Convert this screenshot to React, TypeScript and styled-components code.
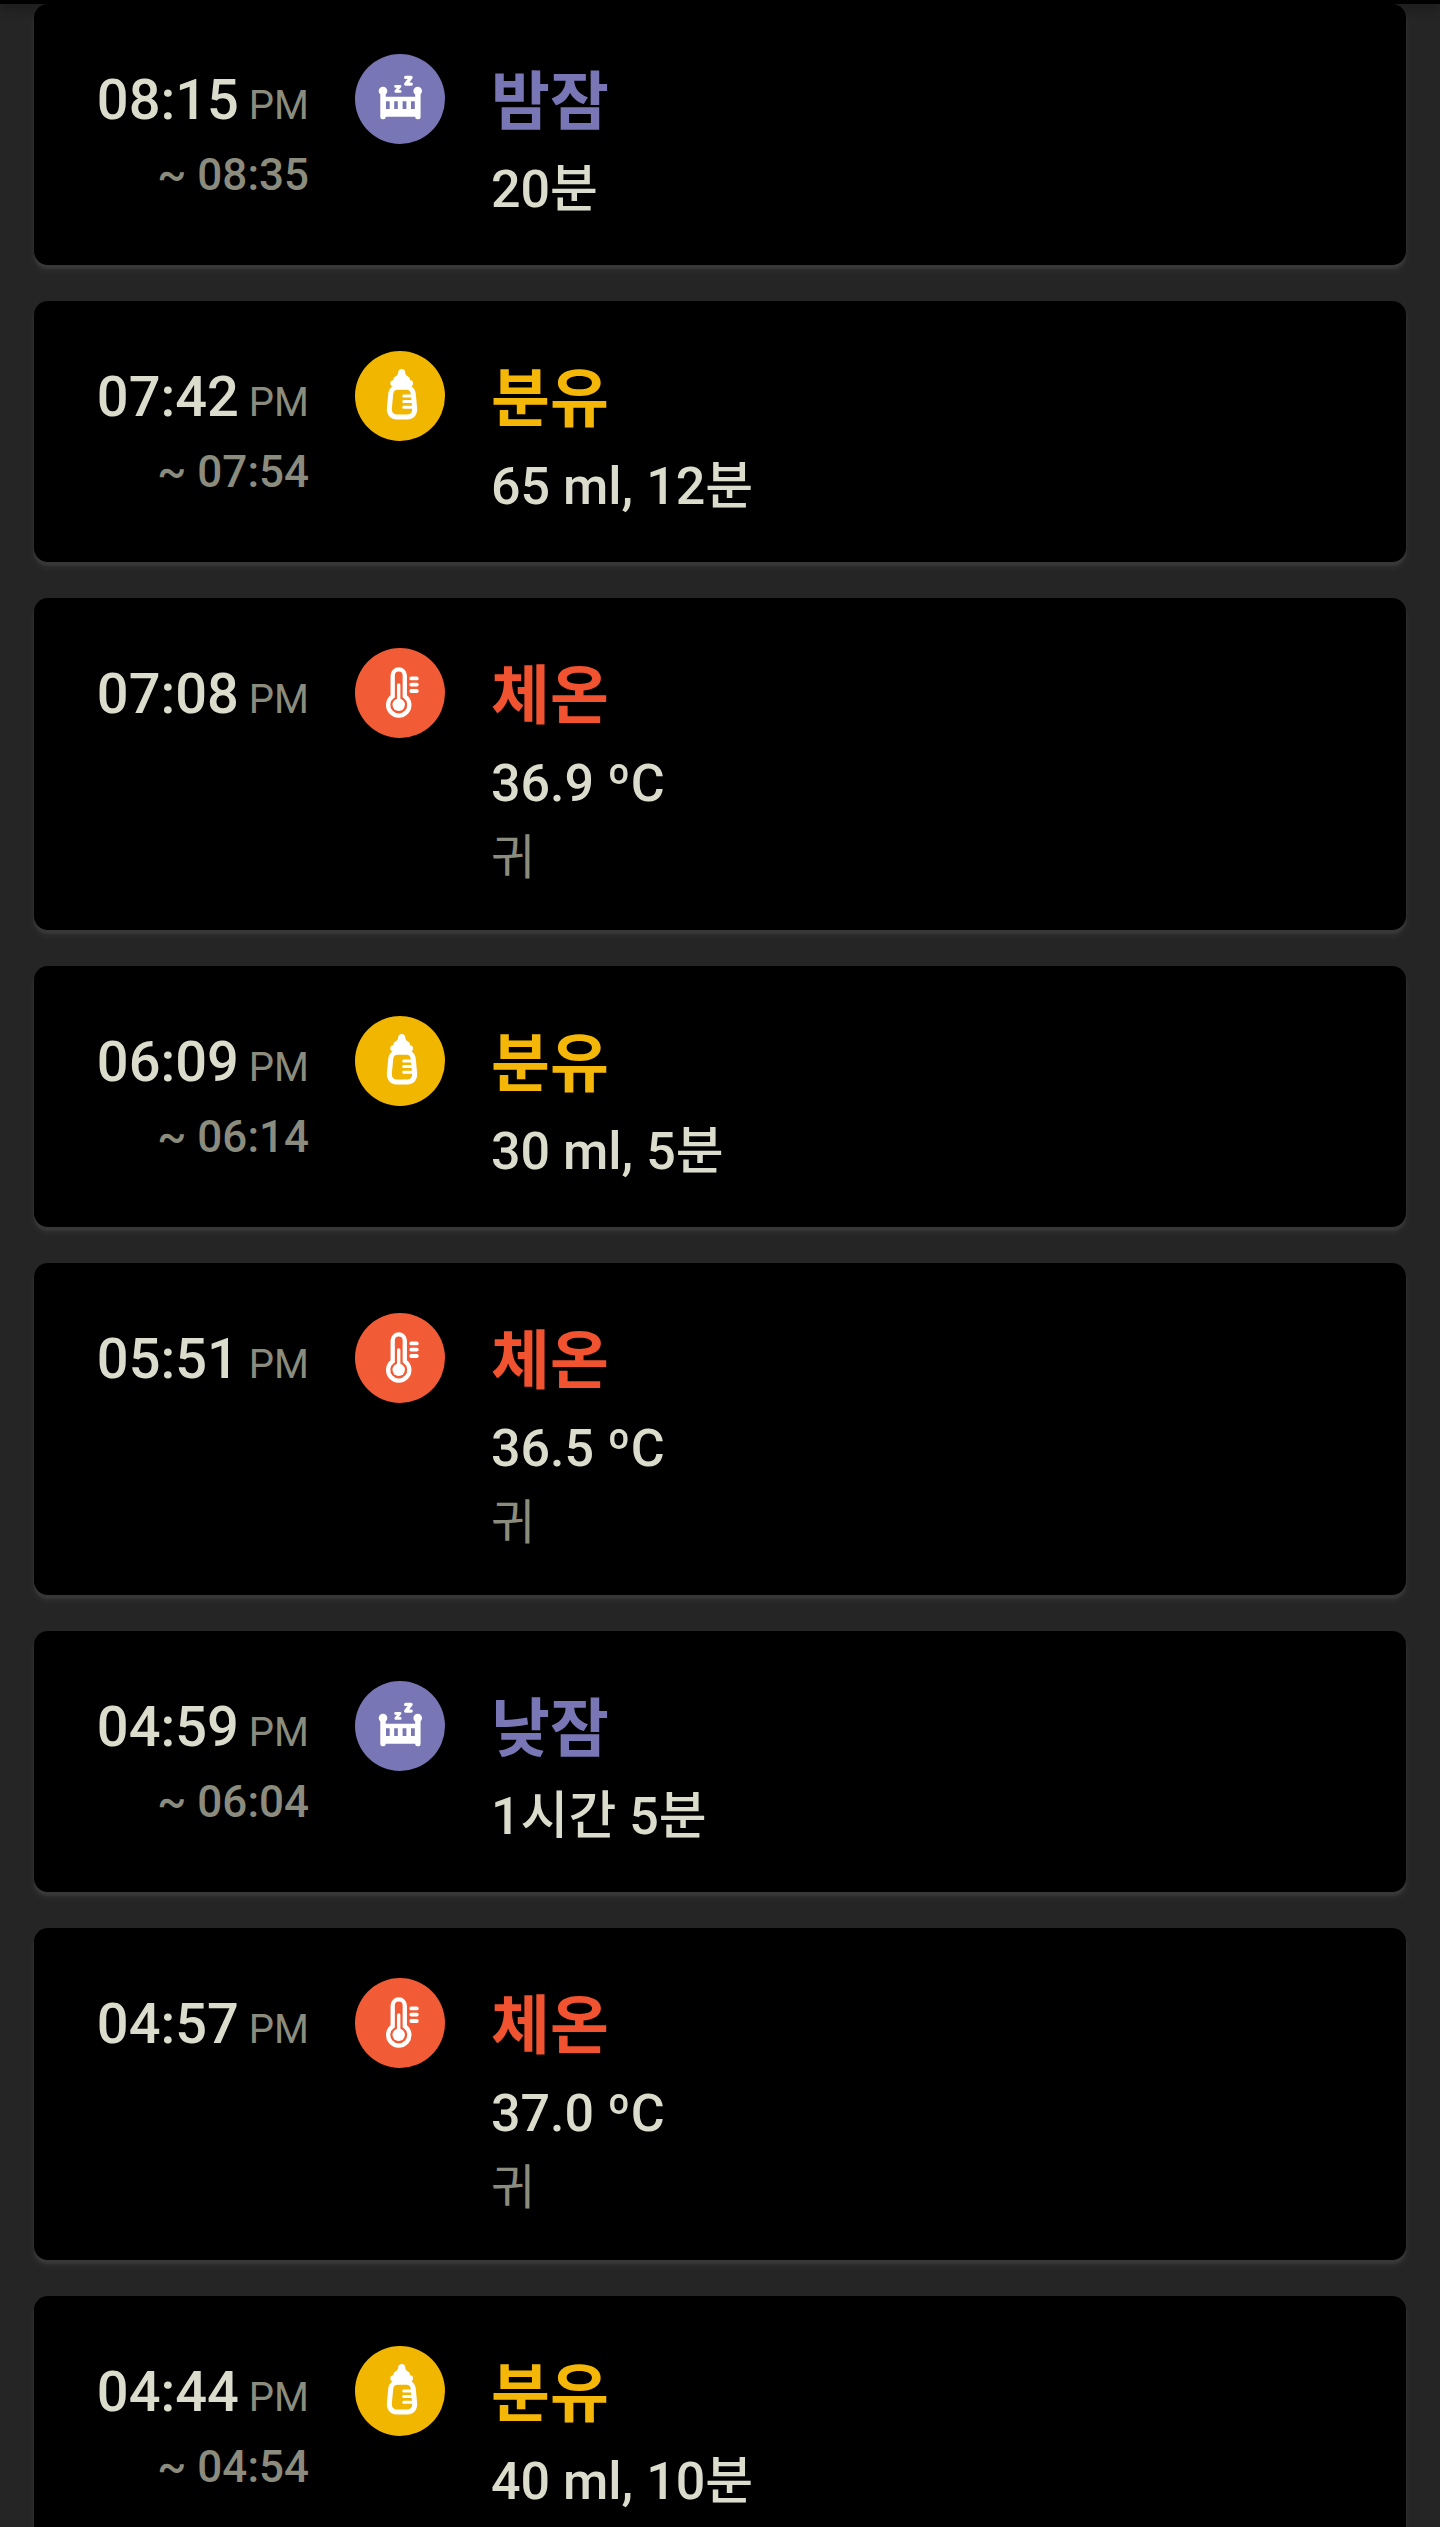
import React from "react";
import styled, { createGlobalStyle } from "styled-components";

const GlobalStyle = createGlobalStyle`
  *, *::before, *::after { box-sizing: border-box; }
  body {
    margin: 0;
    background: #252525;
    font-family: Roboto, "Noto Sans CJK KR", sans-serif;
  }
`;

const palette = {
  sleep: { badge: "#7876b4", title: "#7876b4" },
  formula: { badge: "#f1b600", title: "#f4b607" },
  temperature: { badge: "#f15b35", title: "#f1522f" },
};

type Kind = keyof typeof palette;

interface Entry {
  kind: Kind;
  title: string;
  start: string;
  end?: string;
  detail: string;
  note?: string;
}

const entries: Entry[] = [
  { kind: "sleep", title: "밤잠", start: "08:15", end: "08:35", detail: "20분" },
  { kind: "formula", title: "분유", start: "07:42", end: "07:54", detail: "65 ml, 12분" },
  { kind: "temperature", title: "체온", start: "07:08", detail: "36.9 ºC", note: "귀" },
  { kind: "formula", title: "분유", start: "06:09", end: "06:14", detail: "30 ml, 5분" },
  { kind: "temperature", title: "체온", start: "05:51", detail: "36.5 ºC", note: "귀" },
  { kind: "sleep", title: "낮잠", start: "04:59", end: "06:04", detail: "1시간 5분" },
  { kind: "temperature", title: "체온", start: "04:57", detail: "37.0 ºC", note: "귀" },
  { kind: "formula", title: "분유", start: "04:44", end: "04:54", detail: "40 ml, 10분" },
];

const Screen = styled.main`
  display: flex;
  flex-direction: column;
  height: 100vh;
  background: #252525;
`;

const TopEdge = styled.div`
  flex: none;
  height: 4px;
  background: #000;
  box-shadow: 0 2px 12px rgba(0, 0, 0, 0.6);
`;

const Feed = styled.ul`
  flex: 1;
  min-height: 0;
  margin: 0;
  padding: 0 34px 36px;
  display: flex;
  flex-direction: column;
  gap: 36px;
  list-style: none;
  overflow-y: auto;
  scrollbar-width: none;
`;

const Card = styled.li`
  flex: none;
  display: grid;
  grid-template-columns: 227px 90px 1fr;
  column-gap: 46px;
  align-items: start;
  padding: 50px 48px 39px;
  border-radius: 14px;
  background: #000;
  box-shadow: 0 4px 2px #383838, 0 6px 8px rgba(255, 255, 255, 0.05);
`;

const Times = styled.div`
  text-align: right;
  white-space: nowrap;
`;

const StartTime = styled.div`
  color: #dcdccd;
  font-size: 56px;
  font-weight: 500;
  line-height: 92px;
`;

const Meridiem = styled.span`
  color: #8b8c7e;
  font-size: 40px;
  font-weight: 400;
  line-height: 1;
`;

const EndTime = styled.div`
  color: #8b8c7e;
  font-size: 44px;
  font-weight: 500;
  line-height: 58px;
`;

const Badge = styled.svg`
  display: block;
  width: 90px;
  height: 90px;
`;

const Title = styled.h2<{ $color: string }>`
  margin: 0 0 16px;
  color: ${(p) => p.$color};
  font-family: "Noto Sans CJK KR", sans-serif;
  font-size: 64px;
  font-weight: 700;
  line-height: 84px;
`;

const Detail = styled.p`
  margin: 0;
  color: #dcdccd;
  font-size: 52px;
  font-weight: 500;
  line-height: 72px;
`;

const Note = styled.p`
  margin: 0 0 5px;
  color: #8b8c7e;
  font-family: "Noto Sans CJK KR", sans-serif;
  font-size: 48px;
  font-weight: 400;
  line-height: 66px;
`;

const Crib = () => (
  <g fill="#fff">
    <circle cx="28" cy="37" r="4.3" />
    <circle cx="62.7" cy="37" r="4.3" />
    <rect x="25.3" y="37" width="5.4" height="28.3" rx="2.2" />
    <rect x="60.2" y="37" width="5.4" height="28.3" rx="2.2" />
    <path
      fillRule="evenodd"
      d="M26 42.7H65V62.7H26ZM31 47.2V55H34.7V47.2ZM39.2 47.2V55H42.8V47.2ZM47.6 47.2V55H51.4V47.2ZM56 47.2V55H59.8V47.2Z"
    />
    <g fill="none" stroke="#fff" strokeLinejoin="round" strokeLinecap="round">
      <path strokeWidth="2.8" d="M40.6 32.4H45L40.8 37.4H45.2" />
      <path strokeWidth="3.4" d="M50.7 23.4H56L50.8 30.1H56.2" />
    </g>
  </g>
);

const Bottle = () => (
  <g>
    <path
      fill="#fff"
      d="M46.7 18c-2.1 0-3.6 1.5-3.6 3.6 0 2-.8 3-2.3 3.7-1.7.8-2.6 2-2.2 3.8-2.5.3-3.6 1.9-3.2 3.9.3 1.7 1.5 2.7 3.2 2.7h16.2c1.7 0 2.9-1 3.2-2.7.4-2-.7-3.6-3.2-3.900.4-1.800-.5-3-2.200-3.800-1.500-.7-2.300-1.700-2.300-3.700 0-2.100-1.500-3.600-3.600-3.600z"
    />
    <path
      fill="none"
      stroke="#fff"
      strokeWidth="5"
      d="M42.5 36.3h9c3.6 0 6.2 2.5 6.7 6l1.4 14.5c.6 5.4-2.3 9.1-7.1 9.1h-11c-4.8 0-7.7-3.7-7.1-9.1l1.4-14.5c.5-3.5 3.1-6 6.7-6z"
    />
    <path
      fill="none"
      stroke="#fff"
      strokeWidth="3"
      strokeLinecap="round"
      d="M48.7 45.1H57M48.7 50.5H57M48.7 56.3H58"
    />
  </g>
);

const Thermometer = () => (
  <g fill="none" stroke="#fff">
    <path
      strokeWidth="4.3"
      d="M37.7 27.5a6.05 6.05 0 0 1 12.1 0V48.3a10.6 10.6 0 1 1-12.1 0Z"
    />
    <path strokeWidth="3.4" strokeLinecap="round" d="M43.7 37V55" />
    <circle cx="43.7" cy="56.8" r="6.2" fill="#fff" stroke="none" />
    <path strokeWidth="3.8" strokeLinecap="round" d="M56.3 30.4H61.8M56.3 36.6H61.8M56.3 43H61.8" />
  </g>
);

const glyphs: Record<Kind, React.FC> = {
  sleep: Crib,
  formula: Bottle,
  temperature: Thermometer,
};

const EntryCard = ({ entry }: { entry: Entry }) => {
  const Glyph = glyphs[entry.kind];
  const colors = palette[entry.kind];
  return (
    <Card>
      <Times>
        <StartTime>
          <time>{entry.start}</time>
          <Meridiem> PM</Meridiem>
        </StartTime>
        {entry.end && <EndTime>~ {entry.end}</EndTime>}
      </Times>
      <Badge viewBox="0 0 90 90" aria-hidden="true">
        <circle cx="45" cy="45" r="45" fill={colors.badge} />
        <Glyph />
      </Badge>
      <div>
        <Title $color={colors.title}>{entry.title}</Title>
        <Detail>{entry.detail}</Detail>
        {entry.note && <Note>{entry.note}</Note>}
      </div>
    </Card>
  );
};

export default function App() {
  return (
    <>
      <GlobalStyle />
      <Screen>
        <TopEdge />
        <Feed>
          {entries.map((entry) => (
            <EntryCard key={entry.start} entry={entry} />
          ))}
        </Feed>
      </Screen>
    </>
  );
}
